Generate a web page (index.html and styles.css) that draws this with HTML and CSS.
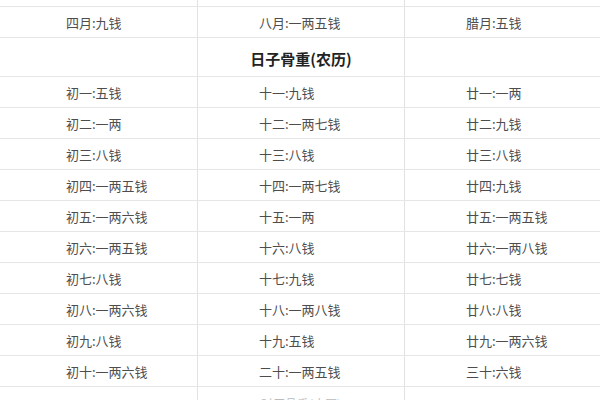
FILE: index.html
```html
<!DOCTYPE html>
<html lang="zh">
<head>
<meta charset="utf-8">
<link rel="stylesheet" href="styles.css">
</head>
<body>
<div class="table">
  <div class="row first"><div class="cell c1">三月:一两八钱</div><div class="cell c2">七月:九钱</div><div class="cell c3">冬月:八钱</div></div>
  <div class="row"><div class="cell c1">四月:九钱</div><div class="cell c2">八月:一两五钱</div><div class="cell c3">腊月:五钱</div></div>
  <div class="row head"><div class="cell c1"></div><div class="cell c2 title">日子骨重(农历)</div><div class="cell c3"></div></div>
  <div class="row"><div class="cell c1">初一:五钱</div><div class="cell c2">十一:九钱</div><div class="cell c3">廿一:一两</div></div>
  <div class="row"><div class="cell c1">初二:一两</div><div class="cell c2">十二:一两七钱</div><div class="cell c3">廿二:九钱</div></div>
  <div class="row"><div class="cell c1">初三:八钱</div><div class="cell c2">十三:八钱</div><div class="cell c3">廿三:八钱</div></div>
  <div class="row"><div class="cell c1">初四:一两五钱</div><div class="cell c2">十四:一两七钱</div><div class="cell c3">廿四:九钱</div></div>
  <div class="row"><div class="cell c1">初五:一两六钱</div><div class="cell c2">十五:一两</div><div class="cell c3">廿五:一两五钱</div></div>
  <div class="row"><div class="cell c1">初六:一两五钱</div><div class="cell c2">十六:八钱</div><div class="cell c3">廿六:一两八钱</div></div>
  <div class="row"><div class="cell c1">初七:八钱</div><div class="cell c2">十七:九钱</div><div class="cell c3">廿七:七钱</div></div>
  <div class="row"><div class="cell c1">初八:一两六钱</div><div class="cell c2">十八:一两八钱</div><div class="cell c3">廿八:八钱</div></div>
  <div class="row"><div class="cell c1">初九:八钱</div><div class="cell c2">十九:五钱</div><div class="cell c3">廿九:一两六钱</div></div>
  <div class="row"><div class="cell c1">初十:一两六钱</div><div class="cell c2">二十:一两五钱</div><div class="cell c3">三十:六钱</div></div>
  <div class="row"><div class="cell c1"></div><div class="cell c2 next">时辰骨重(农历)</div><div class="cell c3"></div></div>
</div>
</body>
</html>
```
FILE: styles.css
```css
html, body {
  margin: 0;
  padding: 0;
  background: #ffffff;
  overflow: hidden;
}
body {
  font-family: "Noto Sans CJK SC", "Noto Sans", sans-serif;
  font-size: 13px;
  color: #4d4d4d;
}
.table {
  width: 600px;
  margin-top: -24px;
}
.row {
  display: grid;
  grid-template-columns: 197px 207px 1fr;
  height: 31px;
  box-sizing: border-box;
  border-bottom: 1px solid #e6e6e6;
}
.row.head {
  height: 39px;
}
.cell {
  display: flex;
  align-items: center;
  white-space: nowrap;
}
.c1 {
  padding-left: 66px;
}
.c2 {
  padding-left: 61px;
  border-left: 1px solid #e2e2e2;
}
.c3 {
  padding-left: 61px;
  border-left: 1px solid #e2e2e2;
}
.title {
  justify-content: center;
  padding-left: 0;
  padding-top: 3px;
  font-size: 15px;
  font-weight: bold;
  color: #222222;
}
.next {
  justify-content: center;
  padding-left: 0;
  padding-top: 2px;
  font-size: 12px;
  color: #bbbbbb;
}
```
